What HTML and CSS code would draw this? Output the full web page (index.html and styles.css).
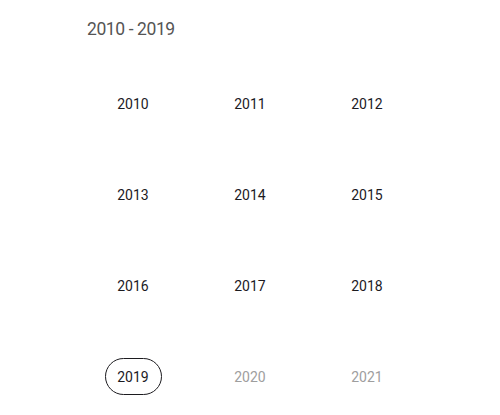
FILE: index.html
```html
<!DOCTYPE html>
<html lang="en">
<head>
    <meta charset="UTF-8">
    <title>Year picker</title>
    <link rel="stylesheet" href="styles.css">
</head>
<body>
    <div class="picker">
        <div class="picker-header">2010 - 2019</div>
        <div class="year-grid">
            <div class="year"><span>2010</span></div>
            <div class="year"><span>2011</span></div>
            <div class="year"><span>2012</span></div>
            <div class="year"><span>2013</span></div>
            <div class="year"><span>2014</span></div>
            <div class="year"><span>2015</span></div>
            <div class="year"><span>2016</span></div>
            <div class="year"><span>2017</span></div>
            <div class="year"><span>2018</span></div>
            <div class="year selected"><span>2019</span></div>
            <div class="year outside"><span>2020</span></div>
            <div class="year outside"><span>2021</span></div>
        </div>
    </div>
</body>
</html>
```

FILE: styles.css
```css
body {
    margin: 0;
    background: #ffffff;
    font-family: 'Roboto', 'Liberation Sans', sans-serif;
}

.picker {
    width: 500px;
    height: 415px;
    overflow: hidden;
}

.picker-header {
    height: 58px;
    display: flex;
    align-items: center;
    padding-left: 87px;
    font-size: 17.5px;
    letter-spacing: -0.4px;
    color: #555555;
}

.year-grid {
    width: 351px;
    margin: 0 auto;
    display: grid;
    grid-template-columns: repeat(3, 117px);
    grid-auto-rows: 91px;
}

.year {
    display: flex;
    align-items: center;
    justify-content: center;
    font-size: 14px;
    color: #1c1b1f;
}

.year span {
    display: flex;
    align-items: center;
    justify-content: center;
    width: 57px;
    height: 37px;
    box-sizing: border-box;
    border-radius: 19px;
    border: 1px solid transparent;
}

.year.selected span {
    border-color: #1c1b1f;
}

.year.outside {
    color: #9e9e9e;
}
```
